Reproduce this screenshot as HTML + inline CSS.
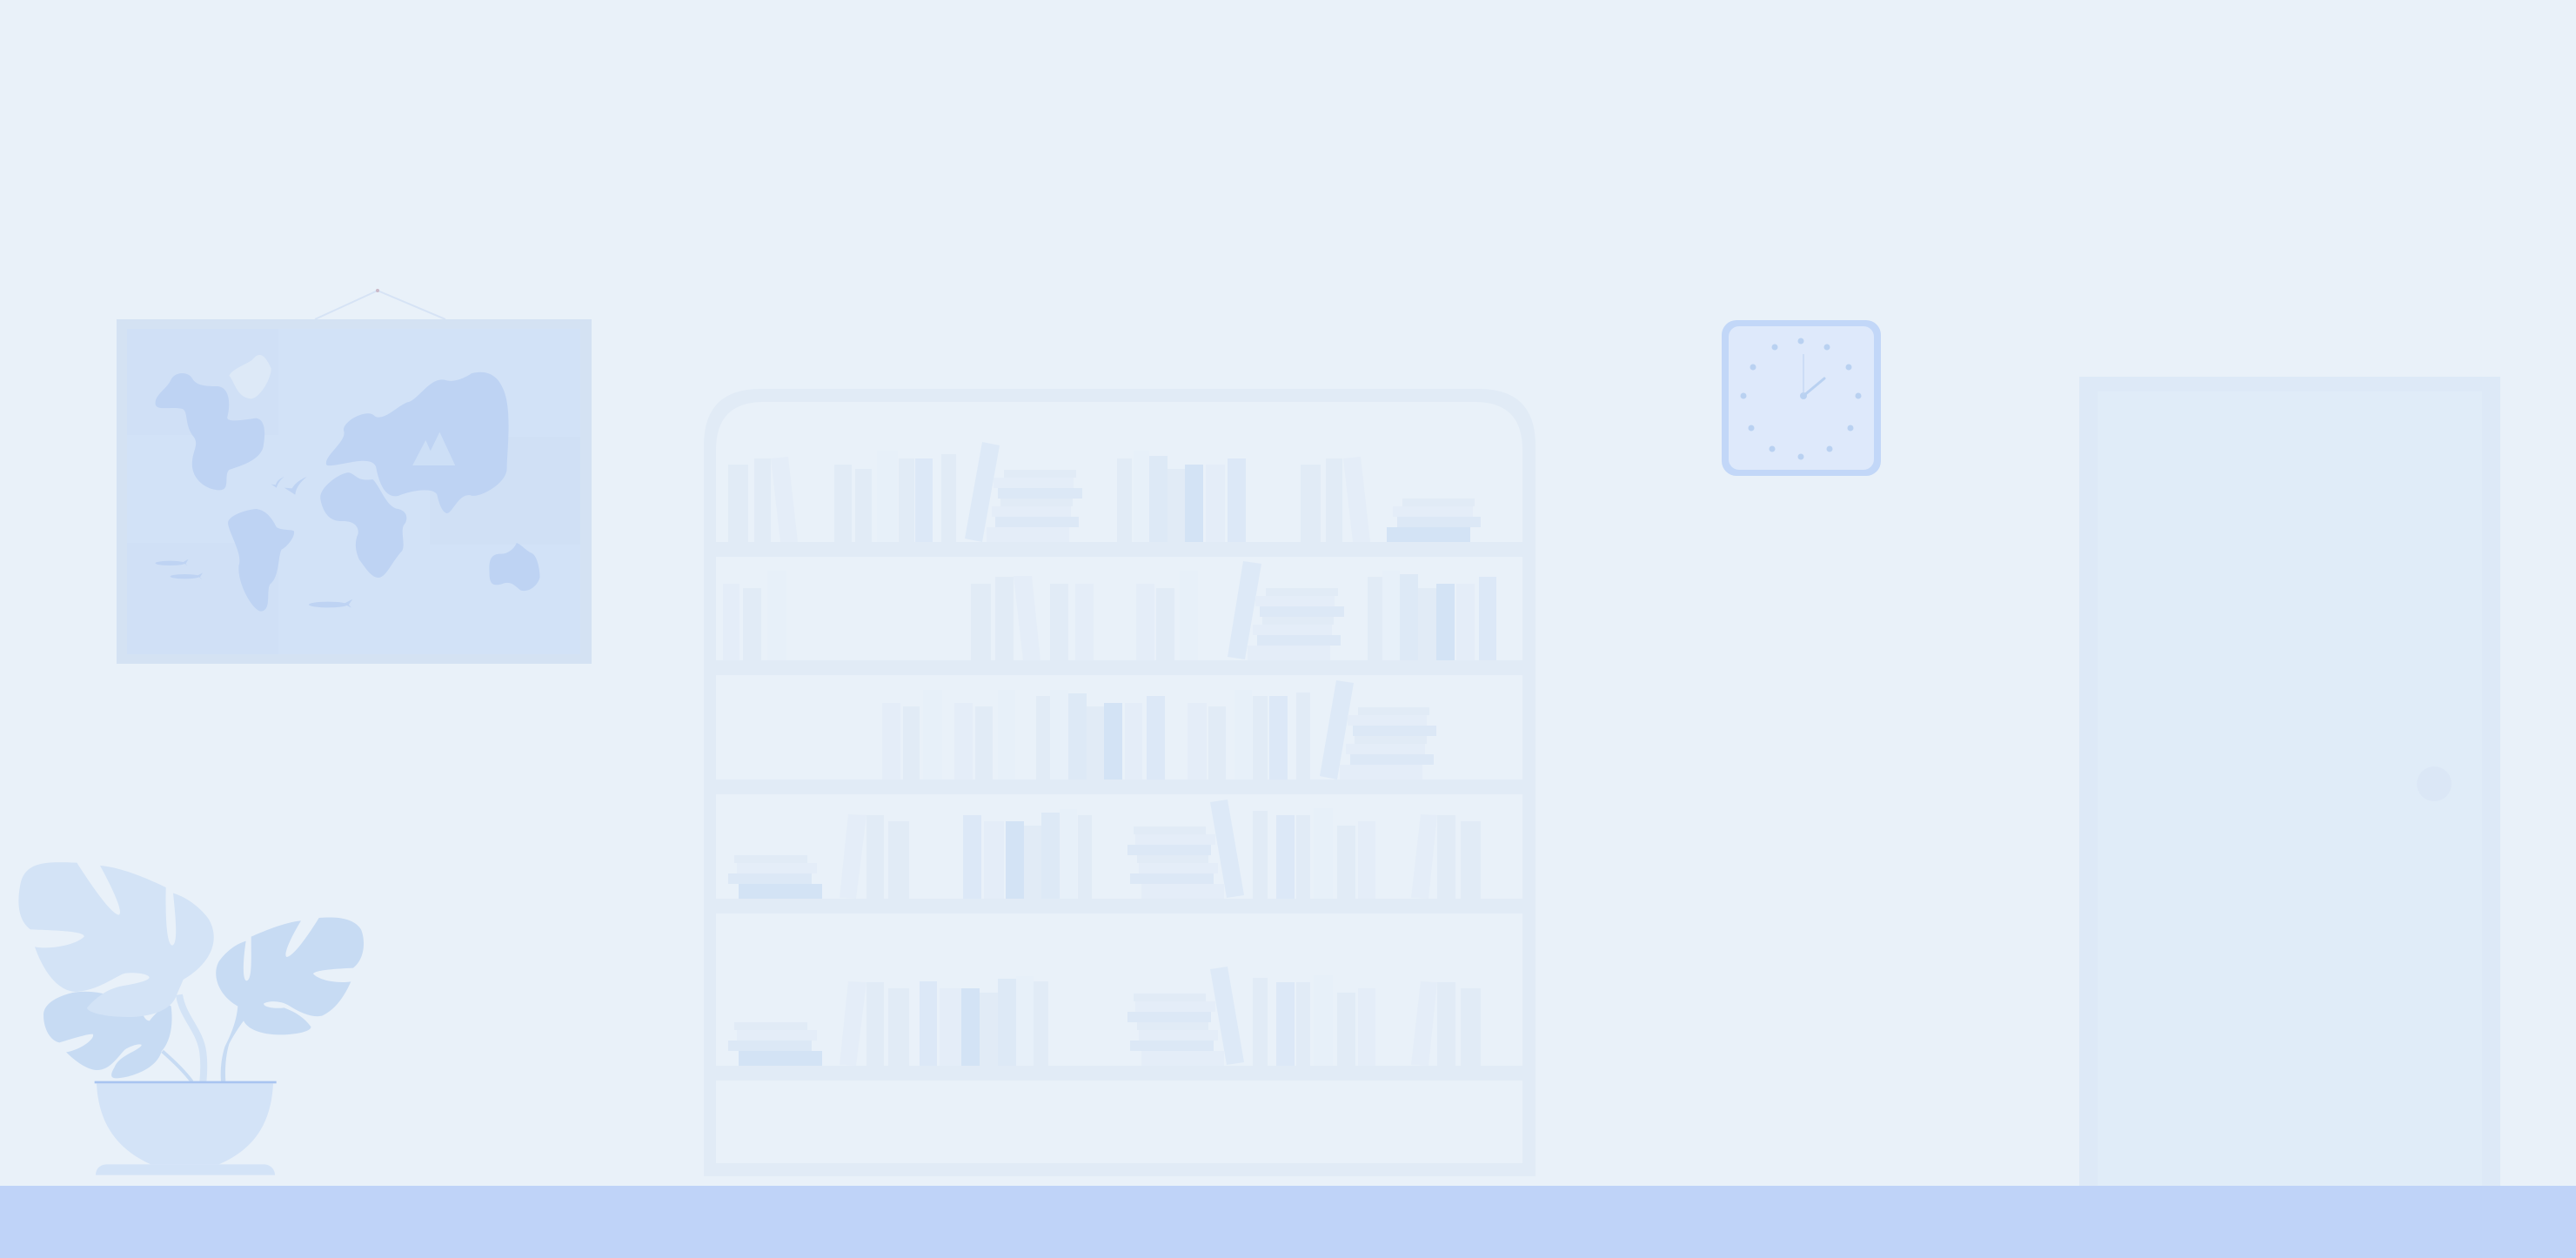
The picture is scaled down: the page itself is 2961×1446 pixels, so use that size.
<!DOCTYPE html>
<html><head><meta charset="utf-8"><style>
html,body{margin:0;padding:0;background:#e9f1f9;}
svg{display:block}
</style></head><body>
<svg width="2961" height="1446" viewBox="0 0 2961 1446" xmlns="http://www.w3.org/2000/svg">
<rect width="2961" height="1446" fill="#e9f1f9"/>
<!-- floor -->
<rect x="0" y="1363" width="2961" height="83" fill="#bfd3f8"/>

<!-- door -->
<rect x="2390" y="433" width="484" height="930" fill="#dde9f7"/>
<rect x="2411" y="450" width="442" height="913" fill="#e0ecf8"/>
<circle cx="2798" cy="901" r="20" fill="#dbe7f6"/>

<!-- clock -->
<rect x="1979" y="368" width="183" height="179" rx="17" fill="#c2d7f8"/>
<rect x="1987" y="375" width="167" height="165" rx="12" fill="#dee9fb"/>
<g fill="#b9d1f1">
<circle cx="2070" cy="392" r="3.5"/><circle cx="2100" cy="399" r="3.5"/><circle cx="2125" cy="422" r="3.5"/><circle cx="2136" cy="455" r="3.5"/><circle cx="2127" cy="492" r="3.5"/><circle cx="2103" cy="516" r="3.5"/><circle cx="2070" cy="525" r="3.5"/><circle cx="2037" cy="516" r="3.5"/><circle cx="2013" cy="492" r="3.5"/><circle cx="2004" cy="455" r="3.5"/><circle cx="2015" cy="422" r="3.5"/><circle cx="2040" cy="399" r="3.5"/>
<circle cx="2073" cy="455" r="4"/>
</g>
<line x1="2073" y1="455" x2="2073" y2="407" stroke="#c0d5f3" stroke-width="1.2"/>
<line x1="2073" y1="455" x2="2097" y2="435" stroke="#b9d1f1" stroke-width="3" stroke-linecap="round"/>

<!-- map -->
<line x1="434" y1="334" x2="362" y2="367" stroke="#d6e3f5" stroke-width="2"/>
<line x1="434" y1="334" x2="512" y2="367" stroke="#d6e3f5" stroke-width="2"/>
<circle cx="434" cy="334" r="2" fill="#cbb9c8"/>
<rect x="134" y="367" width="546" height="396" fill="#d4e2f3"/>
<rect x="146" y="378" width="521" height="374" fill="#d2e2f7"/>
<rect x="146" y="378" width="174" height="122" fill="#d0e0f6"/>
<rect x="146" y="624" width="174" height="128" fill="#d0e0f6"/>
<rect x="494" y="502" width="173" height="124" fill="#d0e0f5"/>
<g transform="translate(0,320) scale(0.44643,0.33333)" fill="#bed3f3">
<path d="M400,430 C400,400 430,380 440,350 C450,320 485,320 495,345 C505,370 530,372 560,372 C590,375 595,430 585,480 C585,500 640,485 660,482 C690,490 680,560 678,580 C670,630 610,650 590,660 C575,680 595,730 565,730 C530,730 490,690 495,630 C497,590 515,570 495,540 C475,500 485,460 470,450 C440,440 400,460 400,430 Z"/>
<path fill="#dde9f7" d="M590,335 C600,310 630,300 650,280 C665,255 680,255 698,310 C700,340 670,415 645,415 C610,410 605,360 590,335 Z"/>
<path d="M587,845 C585,820 630,798 660,795 C690,800 705,840 712,858 C725,870 755,865 757,872 C760,890 740,925 725,935 C715,960 720,1030 695,1055 C685,1080 700,1145 672,1148 C650,1145 610,1050 615,990 C625,950 590,880 587,845 Z"/>
<path d="M840,640 C835,610 895,560 885,525 C880,495 945,445 965,475 C990,495 1030,430 1055,425 C1080,410 1110,340 1145,350 C1170,362 1200,340 1215,327 C1250,315 1280,330 1295,380 C1320,450 1305,600 1305,655 C1305,710 1230,760 1212,748 C1180,740 1165,812 1150,810 C1135,805 1128,760 1125,745 C1115,720 1060,730 1025,750 C990,760 975,700 968,650 C960,620 920,630 900,635 C860,645 840,650 840,640 Z"/>
<path d="M825,760 C820,720 880,665 900,670 C920,680 920,700 960,693 C980,720 995,790 1025,795 C1055,805 1048,840 1040,850 C1030,870 1045,920 1035,940 C1010,975 995,1030 975,1032 C955,1032 940,995 925,970 C915,940 912,910 922,880 C925,850 905,835 880,837 C840,840 828,785 825,760 Z"/>
<path d="M1260,1010 C1258,960 1270,950 1290,950 C1310,950 1325,930 1330,912 C1340,915 1355,940 1370,948 C1385,960 1390,1010 1390,1030 C1385,1060 1360,1085 1340,1075 C1325,1060 1315,1040 1290,1055 C1265,1062 1260,1050 1260,1010 Z"/>
<path fill="#cddff6" d="M1062,645 L1096,558 L1125,645 Z M1090,645 L1132,530 L1172,645 Z"/>
<path d="M698,710 L712,722 C715,705 725,690 732,684 C720,690 712,700 710,712 Z M732,722 L760,746 C762,720 775,700 790,684 C770,695 758,710 752,724 Z"/>
<ellipse cx="438" cy="982" rx="38" ry="8"/><ellipse cx="476" cy="1028" rx="38" ry="8"/><ellipse cx="845" cy="1125" rx="50" ry="10"/>
<path d="M470,980 L485,968 L478,985 L484,992 Z M508,1025 L522,1015 L515,1030 L520,1038 Z M885,1122 L908,1106 L898,1125 L905,1136 Z"/>
</g>

<!-- bookcase frame -->
<path d="M809,1352 L809,512 Q809,447 874,447 L1700,447 Q1765,447 1765,512 L1765,1352 Z" fill="#e1ebf6"/>
<path d="M823,1337 L823,517 Q823,462 878,462 L1695,462 Q1750,462 1750,517 L1750,1337 Z" fill="#e9f1f9"/>
<g fill="#e1ebf6">
<rect x="816" y="623" width="942" height="17"/>
<rect x="816" y="759" width="942" height="17"/>
<rect x="816" y="896" width="942" height="17"/>
<rect x="816" y="1033" width="942" height="17"/>
<rect x="816" y="1225" width="942" height="17"/>
</g>

<!-- shelf 1 -->
<g>
<rect x="837" y="534" width="23" height="89" fill="#e1ebf6"/>
<rect x="867" y="527" width="19" height="96" fill="#e1ebf6"/>
<polygon points="886,527 906,525 917,623 897,623" fill="#e4edf8"/>
<rect x="959" y="534" width="20" height="89" fill="#e1ebf6"/>
<rect x="983" y="539" width="19" height="84" fill="#e1ebf6"/>
<rect x="1008" y="518" width="24" height="105" fill="#e7f0f9"/>
<rect x="1033" y="527" width="18" height="96" fill="#e1ebf6"/>
<rect x="1052" y="527" width="20" height="96" fill="#dce8f7"/>
<rect x="1082" y="522" width="17" height="101" fill="#e1ebf6"/>
<polygon points="1129,508 1149,512 1129,623 1109,619" fill="#dde9f7"/>
<rect x="1154" y="540" width="83" height="9" fill="#e1ebf6"/>
<rect x="1142" y="549" width="92" height="12" fill="#e4edf8"/>
<rect x="1147" y="561" width="97" height="12" fill="#dce8f6"/>
<rect x="1150" y="573" width="83" height="9" fill="#e1ebf6"/>
<rect x="1140" y="582" width="91" height="12" fill="#e4edf8"/>
<rect x="1144" y="594" width="96" height="12" fill="#dce8f6"/>
<rect x="1134" y="606" width="95" height="17" fill="#e4edf8"/>
<rect x="1284" y="527" width="17" height="96" fill="#e1ebf6"/>
<rect x="1303" y="518" width="18" height="105" fill="#e7f0f9"/>
<rect x="1321" y="524" width="21" height="99" fill="#dde9f6"/>
<rect x="1342" y="539" width="20" height="84" fill="#e1ebf6"/>
<rect x="1362" y="534" width="21" height="89" fill="#d3e3f5"/>
<rect x="1386" y="534" width="22" height="89" fill="#e4edf8"/>
<rect x="1411" y="527" width="21" height="96" fill="#dce8f7"/>
<rect x="1495" y="534" width="23" height="89" fill="#e1ebf6"/>
<rect x="1524" y="527" width="19" height="96" fill="#e1ebf6"/>
<polygon points="1544,527 1564,525 1575,623 1555,623" fill="#e4edf8"/>
<rect x="1612" y="573" width="83" height="9" fill="#e1ebf6"/>
<rect x="1601" y="582" width="92" height="12" fill="#e4edf8"/>
<rect x="1606" y="594" width="96" height="12" fill="#dce8f6"/>
<rect x="1594" y="606" width="96" height="17" fill="#d3e3f5"/>
</g>

<!-- shelf 2 -->
<g>
<rect x="831" y="671" width="19" height="88" fill="#e4edf8"/>
<rect x="854" y="676" width="21" height="83" fill="#e1ebf6"/>
<rect x="882" y="656" width="22" height="103" fill="#e7f0f9"/>
<rect x="1116" y="671" width="23" height="88" fill="#e1ebf6"/>
<rect x="1144" y="663" width="21" height="96" fill="#e1ebf6"/>
<polygon points="1165,662 1186,662 1196,759 1176,759" fill="#e4edf8"/>
<rect x="1207" y="671" width="21" height="88" fill="#e1ebf6"/>
<rect x="1236" y="671" width="21" height="88" fill="#e4edf8"/>
<rect x="1306" y="671" width="21" height="88" fill="#e4edf8"/>
<rect x="1329" y="676" width="21" height="83" fill="#e1ebf6"/>
<rect x="1356" y="656" width="21" height="103" fill="#e7f0f9"/>
<polygon points="1429,645 1450,648 1431,758 1411,755" fill="#dde9f7"/>
<rect x="1455" y="676" width="83" height="9" fill="#e1ebf6"/>
<rect x="1443" y="685" width="91" height="12" fill="#e4edf8"/>
<rect x="1448" y="697" width="97" height="12" fill="#dce8f6"/>
<rect x="1451" y="709" width="82" height="9" fill="#e1ebf6"/>
<rect x="1440" y="718" width="91" height="12" fill="#e4edf8"/>
<rect x="1445" y="730" width="96" height="12" fill="#dce8f6"/>
<rect x="1434" y="742" width="95" height="17" fill="#e4edf8"/>
<rect x="1572" y="663" width="17" height="96" fill="#e1ebf6"/>
<rect x="1589" y="656" width="20" height="103" fill="#e7f0f9"/>
<rect x="1609" y="660" width="21" height="99" fill="#dde9f6"/>
<rect x="1630" y="676" width="21" height="83" fill="#e1ebf6"/>
<rect x="1651" y="671" width="21" height="88" fill="#d3e3f5"/>
<rect x="1674" y="671" width="21" height="88" fill="#e4edf8"/>
<rect x="1700" y="663" width="20" height="96" fill="#dce8f7"/>
</g>

<!-- shelf 3 -->
<g>
<rect x="1014" y="808" width="21" height="88" fill="#e4edf8"/>
<rect x="1038" y="812" width="19" height="84" fill="#e1ebf6"/>
<rect x="1061" y="793" width="22" height="103" fill="#e7f0f9"/>
<rect x="1097" y="808" width="21" height="88" fill="#e4edf8"/>
<rect x="1121" y="812" width="20" height="84" fill="#e1ebf6"/>
<rect x="1147" y="793" width="20" height="103" fill="#e7f0f9"/>
<rect x="1191" y="800" width="16" height="96" fill="#e1ebf6"/>
<rect x="1207" y="793" width="21" height="103" fill="#e7f0f9"/>
<rect x="1228" y="797" width="21" height="99" fill="#dde9f6"/>
<rect x="1249" y="812" width="20" height="84" fill="#e1ebf6"/>
<rect x="1269" y="808" width="21" height="88" fill="#d3e3f5"/>
<rect x="1293" y="808" width="20" height="88" fill="#e4edf8"/>
<rect x="1318" y="800" width="21" height="96" fill="#dce8f7"/>
<rect x="1365" y="808" width="22" height="88" fill="#e4edf8"/>
<rect x="1389" y="812" width="20" height="84" fill="#e1ebf6"/>
<rect x="1419" y="793" width="20" height="103" fill="#e7f0f9"/>
<rect x="1440" y="800" width="17" height="96" fill="#e1ebf6"/>
<rect x="1459" y="800" width="21" height="96" fill="#dce8f7"/>
<rect x="1490" y="796" width="16" height="100" fill="#e1ebf6"/>
<polygon points="1536,782 1556,785 1537,896 1517,892" fill="#dde9f7"/>
<rect x="1561" y="813" width="82" height="9" fill="#e1ebf6"/>
<rect x="1549" y="822" width="91" height="12" fill="#e4edf8"/>
<rect x="1555" y="834" width="96" height="12" fill="#dce8f6"/>
<rect x="1557" y="846" width="83" height="9" fill="#e1ebf6"/>
<rect x="1547" y="855" width="91" height="12" fill="#e4edf8"/>
<rect x="1552" y="867" width="96" height="12" fill="#dce8f6"/>
<rect x="1540" y="879" width="95" height="17" fill="#e4edf8"/>
</g>

<!-- shelf 4 and 5 shared parts -->
<defs>
<g id="sh">
<rect x="844" y="983" width="84" height="9" fill="#e1ebf6"/>
<rect x="847" y="992" width="92" height="12" fill="#e4edf8"/>
<rect x="837" y="1004" width="96" height="12" fill="#dce8f6"/>
<rect x="849" y="1016" width="96" height="17" fill="#d3e3f5"/>
<polygon points="975,936 996,937 984,1033 965,1032" fill="#e4edf8"/>
<rect x="996" y="937" width="20" height="96" fill="#e1ebf6"/>
<rect x="1021" y="944" width="24" height="89" fill="#e1ebf6"/>
<rect x="1303" y="950" width="83" height="9" fill="#e1ebf6"/>
<rect x="1305" y="959" width="92" height="12" fill="#e4edf8"/>
<rect x="1296" y="971" width="96" height="12" fill="#dce8f6"/>
<rect x="1307" y="983" width="82" height="9" fill="#e1ebf6"/>
<rect x="1309" y="992" width="91" height="12" fill="#e4edf8"/>
<rect x="1299" y="1004" width="96" height="12" fill="#dce8f6"/>
<rect x="1312" y="1016" width="95" height="17" fill="#e4edf8"/>
<polygon points="1391,922 1411,919 1430,1029 1410,1032" fill="#dde9f7"/>
<rect x="1440" y="932" width="17" height="101" fill="#e1ebf6"/>
<rect x="1467" y="937" width="21" height="96" fill="#dce8f7"/>
<rect x="1490" y="937" width="16" height="96" fill="#e1ebf6"/>
<rect x="1510" y="929" width="22" height="104" fill="#e7f0f9"/>
<rect x="1537" y="949" width="21" height="84" fill="#e1ebf6"/>
<rect x="1561" y="944" width="20" height="89" fill="#e4edf8"/>
<polygon points="1633,936 1652,937 1642,1033 1622,1032" fill="#e4edf8"/>
<rect x="1652" y="937" width="21" height="96" fill="#e1ebf6"/>
<rect x="1679" y="944" width="23" height="89" fill="#e1ebf6"/>
</g>
</defs>
<use href="#sh"/>
<use href="#sh" transform="translate(0,192)"/>
<!-- shelf 4 middle -->
<rect x="1107" y="937" width="21" height="96" fill="#dce8f7"/>
<rect x="1131" y="944" width="23" height="89" fill="#e4edf8"/>
<rect x="1156" y="944" width="21" height="89" fill="#d3e3f5"/>
<rect x="1177" y="949" width="20" height="84" fill="#e1ebf6"/>
<rect x="1197" y="934" width="21" height="99" fill="#dde9f6"/>
<rect x="1218" y="930" width="20" height="103" fill="#e7f0f9"/>
<rect x="1239" y="937" width="16" height="96" fill="#e1ebf6"/>
<!-- shelf 5 middle -->
<rect x="1057" y="1128" width="20" height="97" fill="#dce8f7"/>
<rect x="1080" y="1136" width="25" height="89" fill="#e4edf8"/>
<rect x="1105" y="1136" width="21" height="89" fill="#d3e3f5"/>
<rect x="1126" y="1141" width="21" height="84" fill="#e1ebf6"/>
<rect x="1147" y="1125" width="21" height="100" fill="#dde9f6"/>
<rect x="1168" y="1122" width="20" height="103" fill="#e7f0f9"/>
<rect x="1188" y="1128" width="17" height="97" fill="#e1ebf6"/>

<!-- plant -->
<g transform="translate(0,970) scale(0.33333)">
<path fill="#c7dbf3" d="M250,513 C200,525 150,550 150,590 C150,640 175,680 205,685 C240,675 300,655 320,656 C330,670 280,710 228,718 C270,760 310,780 335,780 C380,780 410,730 430,710 C450,695 490,685 488,695 C475,715 410,730 395,770 C380,795 380,808 400,808 C440,808 540,780 557,715 C580,690 600,640 590,560 C575,545 530,590 516,610 C500,610 495,590 490,585 C420,520 320,500 250,513 Z"/>
<path d="M560,715 C600,750 640,790 662,820" stroke="#c7dbf3" stroke-width="12" fill="none"/>
<path d="M618,520 C630,600 690,640 700,720 C705,760 702,800 700,820" stroke="#d3e3f6" stroke-width="24" fill="none"/>
<path fill="#c7dbf3" d="M1100,255 C1060,320 1010,390 988,390 C975,380 1010,310 1038,265 C980,270 900,305 866,320 C866,400 870,470 850,472 C835,470 838,400 848,335 C800,350 770,385 755,405 C730,450 750,520 820,560 C815,620 790,670 775,700 C760,750 760,790 762,820 L778,820 C775,780 778,730 790,690 C805,660 825,630 840,610 C860,650 930,660 980,658 C1050,655 1075,640 1072,630 C1050,600 1020,580 980,565 C940,570 905,560 910,550 C930,540 970,540 1000,560 C1040,585 1080,600 1110,593 C1160,570 1190,520 1210,475 C1160,482 1100,470 1080,448 C1085,435 1170,430 1218,428 C1260,395 1260,330 1245,295 C1220,255 1160,250 1100,255 Z"/>
<path fill="#d3e3f6" d="M265,65 C310,135 380,240 410,245 C430,235 370,120 345,75 C420,80 520,125 572,150 C570,260 575,350 595,350 C615,340 605,250 597,170 C650,185 700,230 720,260 C760,330 730,410 632,468 L603,535 C580,575 520,597 440,597 C360,597 300,580 300,565 C330,530 370,500 420,490 C480,480 515,470 515,460 C510,445 440,440 420,450 C380,470 330,505 265,510 C200,510 150,440 120,355 C170,365 260,350 290,320 C295,300 180,298 105,295 C70,270 55,220 70,140 C85,60 160,60 265,65 Z"/>
<path fill="#d3e3f7" d="M333,826 C340,980 420,1060 520,1105 L755,1105 C860,1060 935,980 942,826 Z"/>
<path fill="#d3e3f7" d="M330,1142 C330,1120 345,1105 370,1105 L910,1105 C930,1105 948,1120 948,1142 Z"/>
<rect x="326" y="818" width="627" height="8" fill="#a8c4f0"/>
</g>
</svg>
</body></html>
